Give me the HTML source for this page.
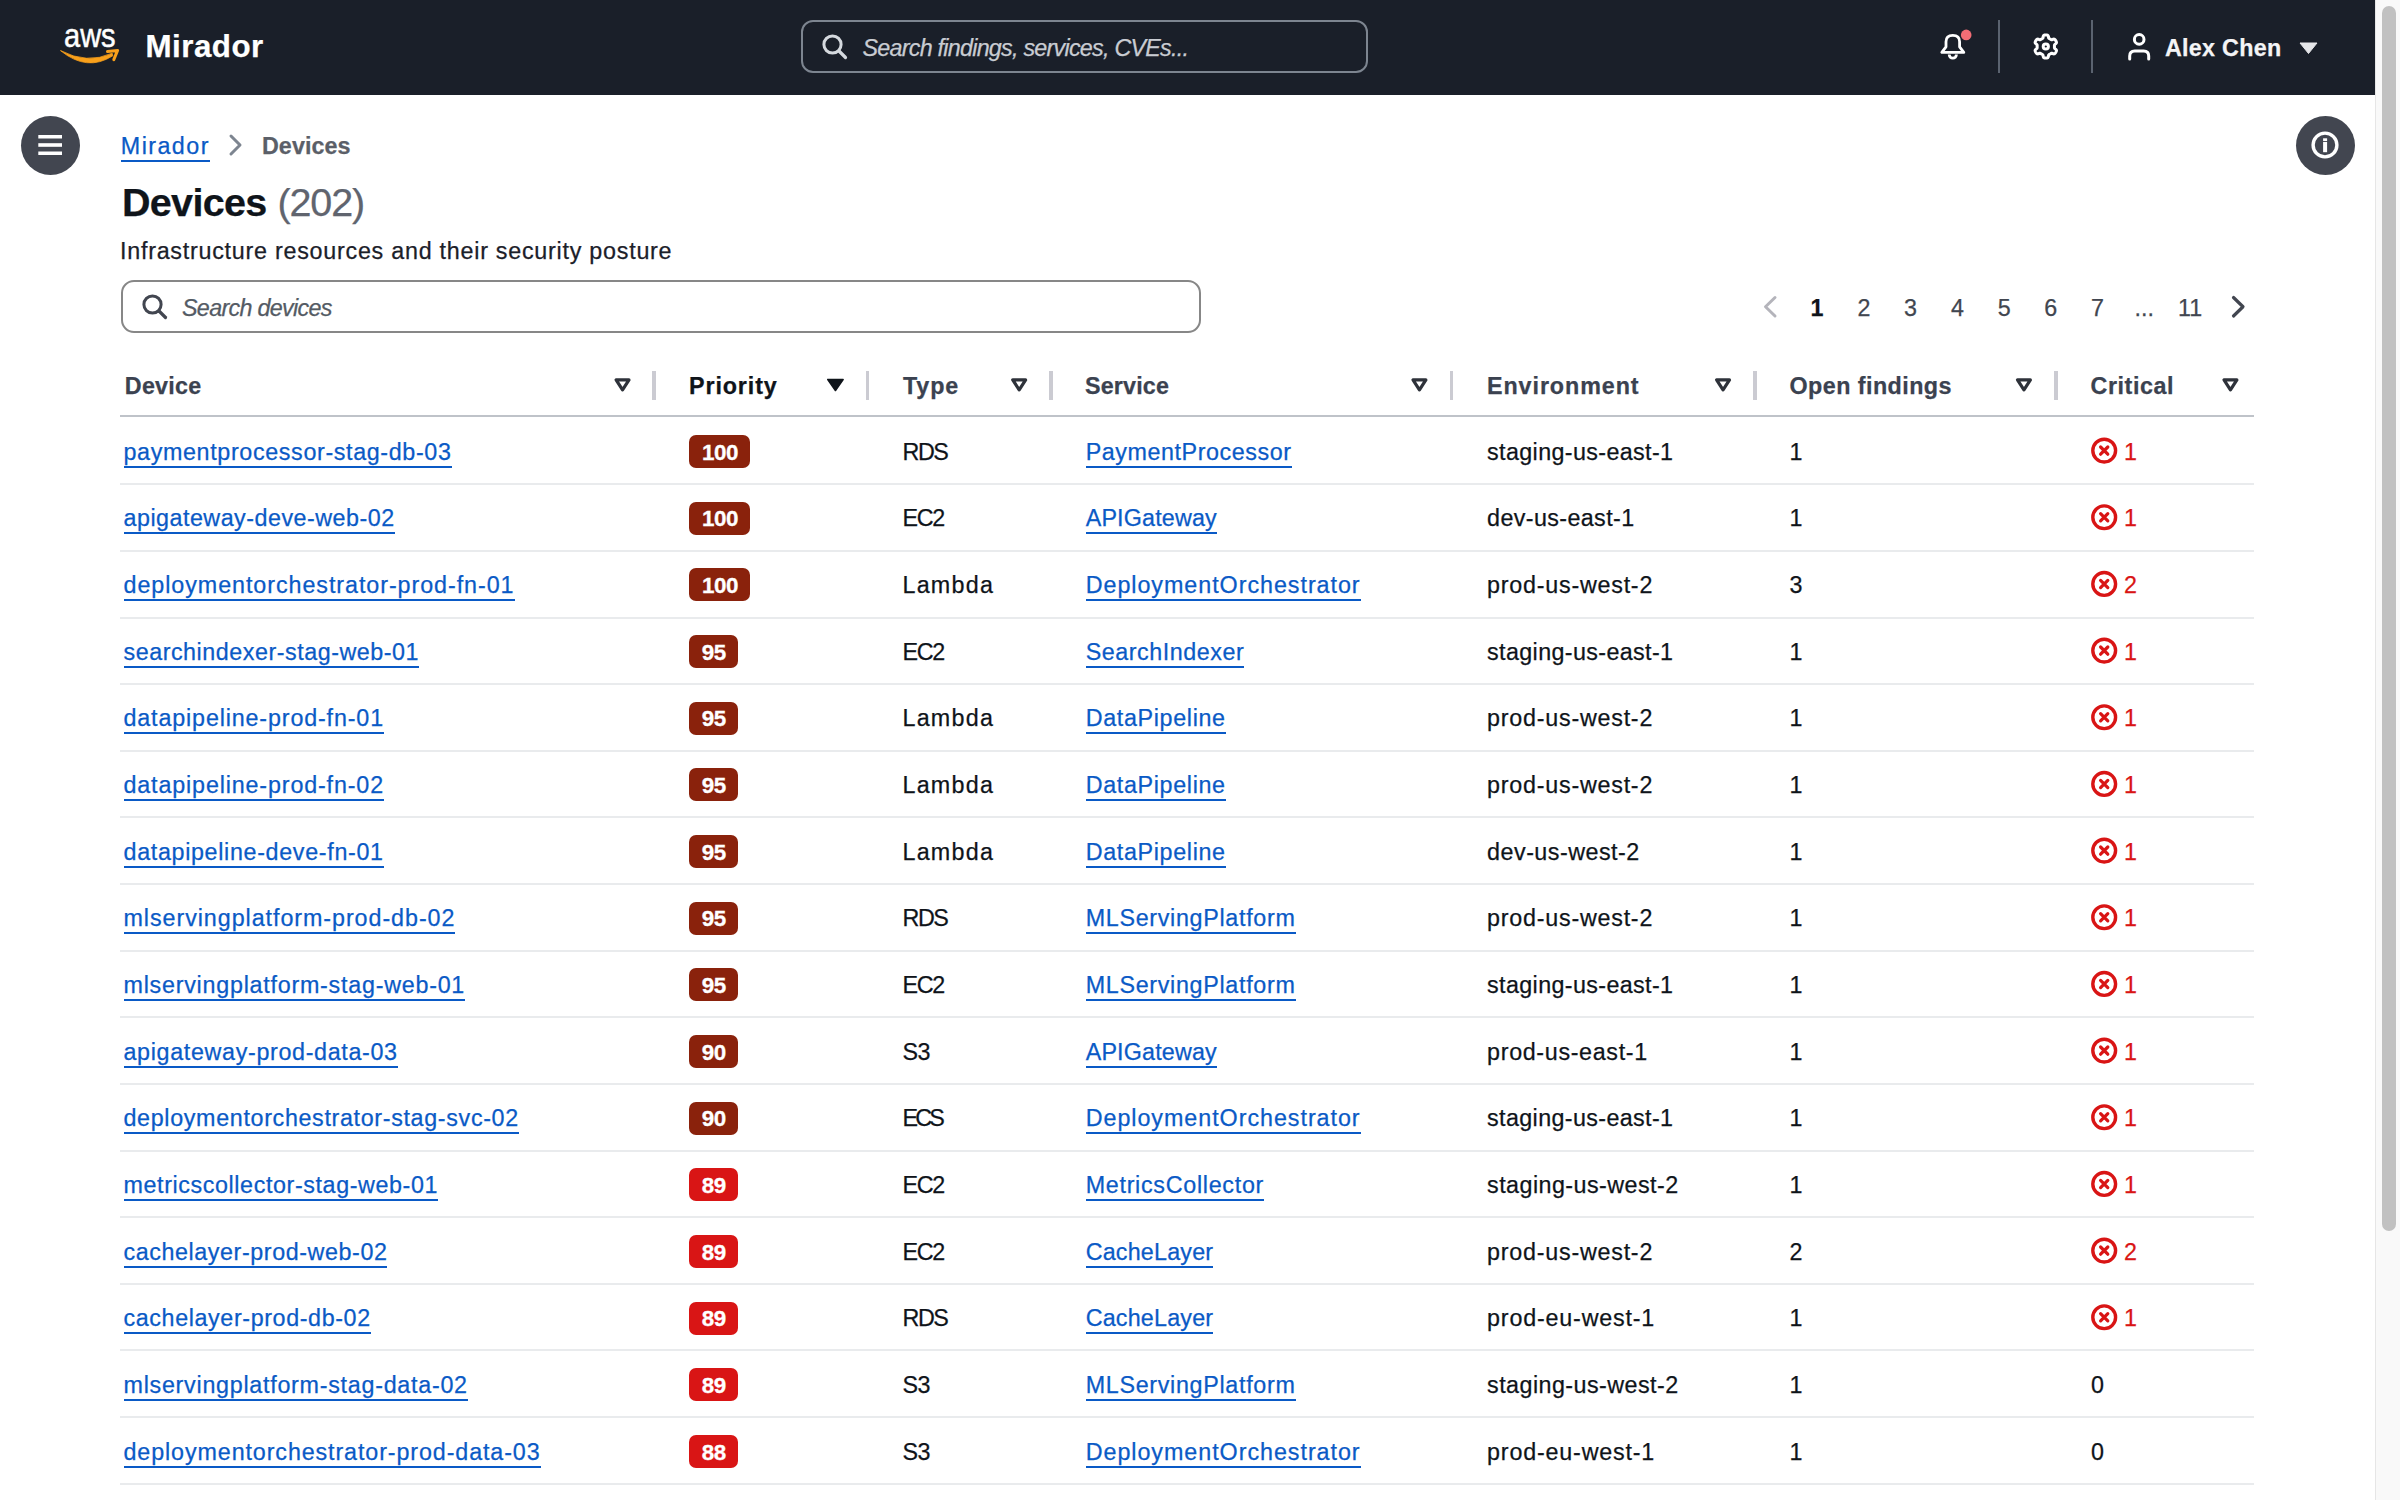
<!DOCTYPE html><html><head><meta charset="utf-8"><title>Devices</title><style>
*{margin:0;padding:0;box-sizing:border-box}
html,body{width:2400px;height:1500px;overflow:hidden;background:#fff}
body{position:relative;font-family:"Liberation Sans",sans-serif;color:#0f141a}
.t{position:absolute;white-space:nowrap;line-height:1;-webkit-text-stroke:0.25px currentColor}
.lnk::after{content:"";position:absolute;left:0;right:0;top:24.8px;height:2px;background:#0a5ac6}
#hdr{position:absolute;left:0;top:0;width:2376px;height:95px;background:#1a1f29}
.sep{position:absolute;background:#5b6370}
.circ{position:absolute;width:59px;height:59px;border-radius:50%;background:#424650}
.box{position:absolute;border-style:solid}
.hsep{position:absolute;top:370.5px;width:3.4px;height:29.2px;background:#cbcbd2}
.hline{position:absolute;left:120px;width:2134px;height:2px}
.badge{position:absolute;height:33px;border-radius:7px;color:#fff;font-weight:700;font-size:22.4px;line-height:1;text-align:center;letter-spacing:-0.5px;text-indent:0.5px;-webkit-text-stroke:0.3px #fff}
.dk{background:#8a220c}
.rd{background:#d91515}
svg{position:absolute;left:0;top:0;overflow:visible}
</style></head><body>
<div id="hdr"></div>
<span class="t" style="left:63.5px;top:18.6px;font-size:33px;color:#fff;-webkit-text-stroke:0.5px #fff;transform:scaleX(0.88);transform-origin:0 0">aws</span>
<div class="box" style="left:801px;top:20px;width:567px;height:53px;border-width:2px;border-color:#7d8590;border-radius:12px"></div>
<div class="sep" style="left:1997.5px;top:19.5px;width:2px;height:53.5px"></div>
<div class="sep" style="left:2091px;top:19.5px;width:2px;height:53.5px"></div>
<div style="position:absolute;left:2375px;top:0;width:25px;height:1500px;background:#f9f9f9;border-left:1px solid #e6e6e6"></div>
<div style="position:absolute;left:2381.5px;top:6px;width:14px;height:1225px;border-radius:7px;background:#c1c1c1"></div>
<div class="circ" style="left:20.5px;top:115.5px"></div>
<div class="circ" style="left:2295.5px;top:115.5px"></div>
<div class="box" style="left:121px;top:280px;width:1080px;height:53px;border-width:2px;border-color:#878787;border-radius:13px"></div>
<div class="hsep" style="left:652.3px"></div>
<div class="hsep" style="left:866px"></div>
<div class="hsep" style="left:1049.3px"></div>
<div class="hsep" style="left:1449.9px"></div>
<div class="hsep" style="left:1753.3px"></div>
<div class="hsep" style="left:2054.3px"></div>
<div class="hline" style="top:415px;background:#bfc3c9"></div>
<div class="hline" style="top:483.30px;background:#e9ebed"></div>
<span class="badge dk" style="left:689.3px;top:435.00px;width:61px;padding-top:6.54px">100</span>
<div class="hline" style="top:549.93px;background:#e9ebed"></div>
<span class="badge dk" style="left:689.3px;top:501.67px;width:61px;padding-top:6.54px">100</span>
<div class="hline" style="top:616.56px;background:#e9ebed"></div>
<span class="badge dk" style="left:689.3px;top:568.33px;width:61px;padding-top:6.54px">100</span>
<div class="hline" style="top:683.19px;background:#e9ebed"></div>
<span class="badge dk" style="left:689.3px;top:635.00px;width:48.5px;padding-top:6.54px">95</span>
<div class="hline" style="top:749.82px;background:#e9ebed"></div>
<span class="badge dk" style="left:689.3px;top:701.67px;width:48.5px;padding-top:6.54px">95</span>
<div class="hline" style="top:816.45px;background:#e9ebed"></div>
<span class="badge dk" style="left:689.3px;top:768.34px;width:48.5px;padding-top:6.54px">95</span>
<div class="hline" style="top:883.08px;background:#e9ebed"></div>
<span class="badge dk" style="left:689.3px;top:835.00px;width:48.5px;padding-top:6.54px">95</span>
<div class="hline" style="top:949.71px;background:#e9ebed"></div>
<span class="badge dk" style="left:689.3px;top:901.67px;width:48.5px;padding-top:6.54px">95</span>
<div class="hline" style="top:1016.34px;background:#e9ebed"></div>
<span class="badge dk" style="left:689.3px;top:968.34px;width:48.5px;padding-top:6.54px">95</span>
<div class="hline" style="top:1082.97px;background:#e9ebed"></div>
<span class="badge dk" style="left:689.3px;top:1035.00px;width:48.5px;padding-top:6.54px">90</span>
<div class="hline" style="top:1149.60px;background:#e9ebed"></div>
<span class="badge dk" style="left:689.3px;top:1101.67px;width:48.5px;padding-top:6.54px">90</span>
<div class="hline" style="top:1216.23px;background:#e9ebed"></div>
<span class="badge rd" style="left:689.3px;top:1168.34px;width:48.5px;padding-top:6.54px">89</span>
<div class="hline" style="top:1282.86px;background:#e9ebed"></div>
<span class="badge rd" style="left:689.3px;top:1235.00px;width:48.5px;padding-top:6.54px">89</span>
<div class="hline" style="top:1349.49px;background:#e9ebed"></div>
<span class="badge rd" style="left:689.3px;top:1301.67px;width:48.5px;padding-top:6.54px">89</span>
<div class="hline" style="top:1416.12px;background:#e9ebed"></div>
<span class="badge rd" style="left:689.3px;top:1368.34px;width:48.5px;padding-top:6.54px">89</span>
<div class="hline" style="top:1482.75px;background:#e9ebed"></div>
<span class="badge rd" style="left:689.3px;top:1435.00px;width:48.5px;padding-top:6.54px">88</span>
<span class="t" style="top:30.90px;font-size:31.3px;font-weight:700;color:#fff;letter-spacing:0.49px;left:145.50px;">Mirador</span>
<span class="t" style="top:36.83px;font-size:23.3px;font-style:italic;color:#c9ccd2;letter-spacing:-0.74px;left:862.50px;">Search findings, services, CVEs...</span>
<span class="t" style="top:36.83px;font-size:23.3px;font-weight:700;color:#f4f4f6;letter-spacing:0.28px;left:2165.00px;">Alex Chen</span>
<span class="t lnk" style="top:134.83px;font-size:23.3px;color:#0a5ac6;letter-spacing:1.44px;left:120.80px;">Mirador</span>
<span class="t" style="top:134.83px;font-size:23.3px;font-weight:700;color:#5b5f68;letter-spacing:0.05px;left:262.00px;">Devices</span>
<span class="t" style="top:182.81px;font-size:39.5px;font-weight:700;color:#0f141a;letter-spacing:-0.69px;left:122.00px;">Devices</span>
<span class="t" style="top:182.81px;font-size:39.5px;color:#60646e;letter-spacing:-1.13px;left:277.50px;">(202)</span>
<span class="t" style="top:239.83px;font-size:23.3px;color:#1b2029;letter-spacing:0.75px;left:120.00px;">Infrastructure resources and their security posture</span>
<span class="t" style="top:296.58px;font-size:23.3px;font-style:italic;color:#545b64;letter-spacing:-0.68px;left:182.00px;">Search devices</span>
<span class="t" style="top:296.88px;font-size:23.3px;font-weight:700;color:#0f141a;left:1777.00px;width:80px;text-align:center;">1</span>
<span class="t" style="top:296.88px;font-size:23.3px;color:#414650;left:1824.00px;width:80px;text-align:center;">2</span>
<span class="t" style="top:296.88px;font-size:23.3px;color:#414650;left:1870.40px;width:80px;text-align:center;">3</span>
<span class="t" style="top:296.88px;font-size:23.3px;color:#414650;left:1917.50px;width:80px;text-align:center;">4</span>
<span class="t" style="top:296.88px;font-size:23.3px;color:#414650;left:1964.30px;width:80px;text-align:center;">5</span>
<span class="t" style="top:296.88px;font-size:23.3px;color:#414650;left:2010.70px;width:80px;text-align:center;">6</span>
<span class="t" style="top:296.88px;font-size:23.3px;color:#414650;left:2057.50px;width:80px;text-align:center;">7</span>
<span class="t" style="top:296.88px;font-size:23.3px;color:#414650;left:2104.20px;width:80px;text-align:center;">...</span>
<span class="t" style="top:296.88px;font-size:23.3px;color:#414650;left:2150.00px;width:80px;text-align:center;">11</span>
<span class="t" style="top:375.08px;font-size:23.3px;font-weight:700;color:#3b4250;letter-spacing:0.26px;left:124.80px;">Device</span>
<span class="t" style="top:375.08px;font-size:23.3px;font-weight:700;color:#0f141a;letter-spacing:0.89px;left:689.00px;">Priority</span>
<span class="t" style="top:375.08px;font-size:23.3px;font-weight:700;color:#3b4250;letter-spacing:0.85px;left:903.00px;">Type</span>
<span class="t" style="top:375.08px;font-size:23.3px;font-weight:700;color:#3b4250;letter-spacing:0.17px;left:1085.00px;">Service</span>
<span class="t" style="top:375.08px;font-size:23.3px;font-weight:700;color:#3b4250;letter-spacing:0.92px;left:1487.00px;">Environment</span>
<span class="t" style="top:375.08px;font-size:23.3px;font-weight:700;color:#3b4250;letter-spacing:0.45px;left:1789.50px;">Open findings</span>
<span class="t" style="top:375.08px;font-size:23.3px;font-weight:700;color:#3b4250;letter-spacing:0.57px;left:2090.50px;">Critical</span>
<span class="t lnk" style="top:440.78px;font-size:23.3px;color:#0a5ac6;letter-spacing:0.64px;left:123.50px;">paymentprocessor-stag-db-03</span>
<span class="t" style="top:440.78px;font-size:23.3px;color:#0f141a;letter-spacing:-1.42px;left:902.50px;">RDS</span>
<span class="t lnk" style="top:440.78px;font-size:23.3px;color:#0a5ac6;letter-spacing:0.57px;left:1085.70px;">PaymentProcessor</span>
<span class="t" style="top:440.78px;font-size:23.3px;color:#0f141a;letter-spacing:0.37px;left:1487.10px;">staging-us-east-1</span>
<span class="t" style="top:440.78px;font-size:23.3px;color:#0f141a;left:1756.00px;width:80px;text-align:center;">1</span>
<span class="t" style="top:440.78px;font-size:23.3px;color:#d91515;left:2090.50px;width:80px;text-align:center;">1</span>
<span class="t lnk" style="top:507.44px;font-size:23.3px;color:#0a5ac6;letter-spacing:0.49px;left:123.50px;">apigateway-deve-web-02</span>
<span class="t" style="top:507.44px;font-size:23.3px;color:#0f141a;letter-spacing:-1.25px;left:902.50px;">EC2</span>
<span class="t lnk" style="top:507.44px;font-size:23.3px;color:#0a5ac6;letter-spacing:0.17px;left:1085.70px;">APIGateway</span>
<span class="t" style="top:507.44px;font-size:23.3px;color:#0f141a;letter-spacing:0.38px;left:1487.10px;">dev-us-east-1</span>
<span class="t" style="top:507.44px;font-size:23.3px;color:#0f141a;left:1756.00px;width:80px;text-align:center;">1</span>
<span class="t" style="top:507.44px;font-size:23.3px;color:#d91515;left:2090.50px;width:80px;text-align:center;">1</span>
<span class="t lnk" style="top:574.11px;font-size:23.3px;color:#0a5ac6;letter-spacing:0.94px;left:123.50px;">deploymentorchestrator-prod-fn-01</span>
<span class="t" style="top:574.11px;font-size:23.3px;color:#0f141a;letter-spacing:1.23px;left:902.50px;">Lambda</span>
<span class="t lnk" style="top:574.11px;font-size:23.3px;color:#0a5ac6;letter-spacing:0.96px;left:1085.70px;">DeploymentOrchestrator</span>
<span class="t" style="top:574.11px;font-size:23.3px;color:#0f141a;letter-spacing:0.76px;left:1487.10px;">prod-us-west-2</span>
<span class="t" style="top:574.11px;font-size:23.3px;color:#0f141a;left:1756.00px;width:80px;text-align:center;">3</span>
<span class="t" style="top:574.11px;font-size:23.3px;color:#d91515;left:2090.50px;width:80px;text-align:center;">2</span>
<span class="t lnk" style="top:640.78px;font-size:23.3px;color:#0a5ac6;letter-spacing:0.53px;left:123.50px;">searchindexer-stag-web-01</span>
<span class="t" style="top:640.78px;font-size:23.3px;color:#0f141a;letter-spacing:-1.25px;left:902.50px;">EC2</span>
<span class="t lnk" style="top:640.78px;font-size:23.3px;color:#0a5ac6;letter-spacing:0.54px;left:1085.70px;">SearchIndexer</span>
<span class="t" style="top:640.78px;font-size:23.3px;color:#0f141a;letter-spacing:0.37px;left:1487.10px;">staging-us-east-1</span>
<span class="t" style="top:640.78px;font-size:23.3px;color:#0f141a;left:1756.00px;width:80px;text-align:center;">1</span>
<span class="t" style="top:640.78px;font-size:23.3px;color:#d91515;left:2090.50px;width:80px;text-align:center;">1</span>
<span class="t lnk" style="top:707.44px;font-size:23.3px;color:#0a5ac6;letter-spacing:0.85px;left:123.50px;">datapipeline-prod-fn-01</span>
<span class="t" style="top:707.44px;font-size:23.3px;color:#0f141a;letter-spacing:1.23px;left:902.50px;">Lambda</span>
<span class="t lnk" style="top:707.44px;font-size:23.3px;color:#0a5ac6;letter-spacing:0.66px;left:1085.70px;">DataPipeline</span>
<span class="t" style="top:707.44px;font-size:23.3px;color:#0f141a;letter-spacing:0.76px;left:1487.10px;">prod-us-west-2</span>
<span class="t" style="top:707.44px;font-size:23.3px;color:#0f141a;left:1756.00px;width:80px;text-align:center;">1</span>
<span class="t" style="top:707.44px;font-size:23.3px;color:#d91515;left:2090.50px;width:80px;text-align:center;">1</span>
<span class="t lnk" style="top:774.11px;font-size:23.3px;color:#0a5ac6;letter-spacing:0.85px;left:123.50px;">datapipeline-prod-fn-02</span>
<span class="t" style="top:774.11px;font-size:23.3px;color:#0f141a;letter-spacing:1.23px;left:902.50px;">Lambda</span>
<span class="t lnk" style="top:774.11px;font-size:23.3px;color:#0a5ac6;letter-spacing:0.66px;left:1085.70px;">DataPipeline</span>
<span class="t" style="top:774.11px;font-size:23.3px;color:#0f141a;letter-spacing:0.76px;left:1487.10px;">prod-us-west-2</span>
<span class="t" style="top:774.11px;font-size:23.3px;color:#0f141a;left:1756.00px;width:80px;text-align:center;">1</span>
<span class="t" style="top:774.11px;font-size:23.3px;color:#d91515;left:2090.50px;width:80px;text-align:center;">1</span>
<span class="t lnk" style="top:840.78px;font-size:23.3px;color:#0a5ac6;letter-spacing:0.67px;left:123.50px;">datapipeline-deve-fn-01</span>
<span class="t" style="top:840.78px;font-size:23.3px;color:#0f141a;letter-spacing:1.23px;left:902.50px;">Lambda</span>
<span class="t lnk" style="top:840.78px;font-size:23.3px;color:#0a5ac6;letter-spacing:0.66px;left:1085.70px;">DataPipeline</span>
<span class="t" style="top:840.78px;font-size:23.3px;color:#0f141a;letter-spacing:0.49px;left:1487.10px;">dev-us-west-2</span>
<span class="t" style="top:840.78px;font-size:23.3px;color:#0f141a;left:1756.00px;width:80px;text-align:center;">1</span>
<span class="t" style="top:840.78px;font-size:23.3px;color:#d91515;left:2090.50px;width:80px;text-align:center;">1</span>
<span class="t lnk" style="top:907.45px;font-size:23.3px;color:#0a5ac6;letter-spacing:0.94px;left:123.50px;">mlservingplatform-prod-db-02</span>
<span class="t" style="top:907.45px;font-size:23.3px;color:#0f141a;letter-spacing:-1.42px;left:902.50px;">RDS</span>
<span class="t lnk" style="top:907.45px;font-size:23.3px;color:#0a5ac6;letter-spacing:0.69px;left:1085.70px;">MLServingPlatform</span>
<span class="t" style="top:907.45px;font-size:23.3px;color:#0f141a;letter-spacing:0.76px;left:1487.10px;">prod-us-west-2</span>
<span class="t" style="top:907.45px;font-size:23.3px;color:#0f141a;left:1756.00px;width:80px;text-align:center;">1</span>
<span class="t" style="top:907.45px;font-size:23.3px;color:#d91515;left:2090.50px;width:80px;text-align:center;">1</span>
<span class="t lnk" style="top:974.11px;font-size:23.3px;color:#0a5ac6;letter-spacing:0.75px;left:123.50px;">mlservingplatform-stag-web-01</span>
<span class="t" style="top:974.11px;font-size:23.3px;color:#0f141a;letter-spacing:-1.25px;left:902.50px;">EC2</span>
<span class="t lnk" style="top:974.11px;font-size:23.3px;color:#0a5ac6;letter-spacing:0.69px;left:1085.70px;">MLServingPlatform</span>
<span class="t" style="top:974.11px;font-size:23.3px;color:#0f141a;letter-spacing:0.37px;left:1487.10px;">staging-us-east-1</span>
<span class="t" style="top:974.11px;font-size:23.3px;color:#0f141a;left:1756.00px;width:80px;text-align:center;">1</span>
<span class="t" style="top:974.11px;font-size:23.3px;color:#d91515;left:2090.50px;width:80px;text-align:center;">1</span>
<span class="t lnk" style="top:1040.78px;font-size:23.3px;color:#0a5ac6;letter-spacing:0.66px;left:123.50px;">apigateway-prod-data-03</span>
<span class="t" style="top:1040.78px;font-size:23.3px;color:#0f141a;letter-spacing:-0.53px;left:902.50px;">S3</span>
<span class="t lnk" style="top:1040.78px;font-size:23.3px;color:#0a5ac6;letter-spacing:0.17px;left:1085.70px;">APIGateway</span>
<span class="t" style="top:1040.78px;font-size:23.3px;color:#0f141a;letter-spacing:0.66px;left:1487.10px;">prod-us-east-1</span>
<span class="t" style="top:1040.78px;font-size:23.3px;color:#0f141a;left:1756.00px;width:80px;text-align:center;">1</span>
<span class="t" style="top:1040.78px;font-size:23.3px;color:#d91515;left:2090.50px;width:80px;text-align:center;">1</span>
<span class="t lnk" style="top:1107.45px;font-size:23.3px;color:#0a5ac6;letter-spacing:0.66px;left:123.50px;">deploymentorchestrator-stag-svc-02</span>
<span class="t" style="top:1107.45px;font-size:23.3px;color:#0f141a;letter-spacing:-2.83px;left:902.50px;">ECS</span>
<span class="t lnk" style="top:1107.45px;font-size:23.3px;color:#0a5ac6;letter-spacing:0.96px;left:1085.70px;">DeploymentOrchestrator</span>
<span class="t" style="top:1107.45px;font-size:23.3px;color:#0f141a;letter-spacing:0.37px;left:1487.10px;">staging-us-east-1</span>
<span class="t" style="top:1107.45px;font-size:23.3px;color:#0f141a;left:1756.00px;width:80px;text-align:center;">1</span>
<span class="t" style="top:1107.45px;font-size:23.3px;color:#d91515;left:2090.50px;width:80px;text-align:center;">1</span>
<span class="t lnk" style="top:1174.11px;font-size:23.3px;color:#0a5ac6;letter-spacing:0.60px;left:123.50px;">metricscollector-stag-web-01</span>
<span class="t" style="top:1174.11px;font-size:23.3px;color:#0f141a;letter-spacing:-1.25px;left:902.50px;">EC2</span>
<span class="t lnk" style="top:1174.11px;font-size:23.3px;color:#0a5ac6;letter-spacing:0.71px;left:1085.70px;">MetricsCollector</span>
<span class="t" style="top:1174.11px;font-size:23.3px;color:#0f141a;letter-spacing:0.45px;left:1487.10px;">staging-us-west-2</span>
<span class="t" style="top:1174.11px;font-size:23.3px;color:#0f141a;left:1756.00px;width:80px;text-align:center;">1</span>
<span class="t" style="top:1174.11px;font-size:23.3px;color:#d91515;left:2090.50px;width:80px;text-align:center;">1</span>
<span class="t lnk" style="top:1240.78px;font-size:23.3px;color:#0a5ac6;letter-spacing:0.58px;left:123.50px;">cachelayer-prod-web-02</span>
<span class="t" style="top:1240.78px;font-size:23.3px;color:#0f141a;letter-spacing:-1.25px;left:902.50px;">EC2</span>
<span class="t lnk" style="top:1240.78px;font-size:23.3px;color:#0a5ac6;letter-spacing:0.20px;left:1085.70px;">CacheLayer</span>
<span class="t" style="top:1240.78px;font-size:23.3px;color:#0f141a;letter-spacing:0.76px;left:1487.10px;">prod-us-west-2</span>
<span class="t" style="top:1240.78px;font-size:23.3px;color:#0f141a;left:1756.00px;width:80px;text-align:center;">2</span>
<span class="t" style="top:1240.78px;font-size:23.3px;color:#d91515;left:2090.50px;width:80px;text-align:center;">2</span>
<span class="t lnk" style="top:1307.45px;font-size:23.3px;color:#0a5ac6;letter-spacing:0.61px;left:123.50px;">cachelayer-prod-db-02</span>
<span class="t" style="top:1307.45px;font-size:23.3px;color:#0f141a;letter-spacing:-1.42px;left:902.50px;">RDS</span>
<span class="t lnk" style="top:1307.45px;font-size:23.3px;color:#0a5ac6;letter-spacing:0.20px;left:1085.70px;">CacheLayer</span>
<span class="t" style="top:1307.45px;font-size:23.3px;color:#0f141a;letter-spacing:0.81px;left:1487.10px;">prod-eu-west-1</span>
<span class="t" style="top:1307.45px;font-size:23.3px;color:#0f141a;left:1756.00px;width:80px;text-align:center;">1</span>
<span class="t" style="top:1307.45px;font-size:23.3px;color:#d91515;left:2090.50px;width:80px;text-align:center;">1</span>
<span class="t lnk" style="top:1374.11px;font-size:23.3px;color:#0a5ac6;letter-spacing:0.73px;left:123.50px;">mlservingplatform-stag-data-02</span>
<span class="t" style="top:1374.11px;font-size:23.3px;color:#0f141a;letter-spacing:-0.53px;left:902.50px;">S3</span>
<span class="t lnk" style="top:1374.11px;font-size:23.3px;color:#0a5ac6;letter-spacing:0.69px;left:1085.70px;">MLServingPlatform</span>
<span class="t" style="top:1374.11px;font-size:23.3px;color:#0f141a;letter-spacing:0.45px;left:1487.10px;">staging-us-west-2</span>
<span class="t" style="top:1374.11px;font-size:23.3px;color:#0f141a;left:1756.00px;width:80px;text-align:center;">1</span>
<span class="t" style="top:1374.11px;font-size:23.3px;color:#0f141a;left:2057.60px;width:80px;text-align:center;">0</span>
<span class="t lnk" style="top:1440.78px;font-size:23.3px;color:#0a5ac6;letter-spacing:0.89px;left:123.50px;">deploymentorchestrator-prod-data-03</span>
<span class="t" style="top:1440.78px;font-size:23.3px;color:#0f141a;letter-spacing:-0.53px;left:902.50px;">S3</span>
<span class="t lnk" style="top:1440.78px;font-size:23.3px;color:#0a5ac6;letter-spacing:0.96px;left:1085.70px;">DeploymentOrchestrator</span>
<span class="t" style="top:1440.78px;font-size:23.3px;color:#0f141a;letter-spacing:0.81px;left:1487.10px;">prod-eu-west-1</span>
<span class="t" style="top:1440.78px;font-size:23.3px;color:#0f141a;left:1756.00px;width:80px;text-align:center;">1</span>
<span class="t" style="top:1440.78px;font-size:23.3px;color:#0f141a;left:2057.60px;width:80px;text-align:center;">0</span>
<svg width="2400" height="1500"><path d="M60.5 50.6 Q87 72.2 112.8 55.8 L112.2 53.2 Q87 64.6 60.5 50.6 Z" fill="#f9a01b" stroke="#f9a01b" stroke-width="0.8" stroke-linejoin="round"/><path d="M107.5 51.6 L117.6 50.4 L113.8 59.6" fill="none" stroke="#f9a01b" stroke-width="3" stroke-linecap="round" stroke-linejoin="round"/><circle cx="832.5" cy="44.5" r="8.6" fill="none" stroke="#d5d9de" stroke-width="3"/><line x1="839" y1="51" x2="845.5" y2="57.5" stroke="#d5d9de" stroke-width="3.2" stroke-linecap="round"/><path d="M1941.8 52.4 L1963.8 52.4 L1959.6 46.8 L1959.6 41.8 Q1959.6 35.4 1952.8 35.4 Q1946 35.4 1946 41.8 L1946 46.8 Z" fill="none" stroke="#fff" stroke-width="2.8" stroke-linejoin="round"/><path d="M1949.2 54.6 A3.6 3.6 0 0 0 1956.4 54.6" fill="none" stroke="#fff" stroke-width="2.8"/><circle cx="1966.2" cy="34.9" r="5.3" fill="#f26d75"/><path d="M2045.80 34.95 L2046.20 34.96 L2046.61 34.99 L2047.00 35.04 L2047.40 35.13 L2047.77 35.31 L2048.10 35.67 L2048.34 36.32 L2048.48 37.17 L2048.62 37.82 L2048.82 38.20 L2049.07 38.41 L2049.33 38.57 L2049.60 38.72 L2049.86 38.86 L2050.12 39.01 L2050.38 39.16 L2050.64 39.32 L2050.90 39.48 L2051.17 39.63 L2051.48 39.73 L2051.90 39.72 L2052.55 39.51 L2053.35 39.21 L2054.03 39.09 L2054.50 39.20 L2054.85 39.43 L2055.12 39.73 L2055.37 40.05 L2055.59 40.38 L2055.80 40.73 L2056.00 41.08 L2056.17 41.44 L2056.33 41.81 L2056.44 42.20 L2056.48 42.61 L2056.33 43.08 L2055.88 43.61 L2055.22 44.15 L2054.72 44.60 L2054.50 44.97 L2054.44 45.29 L2054.43 45.59 L2054.44 45.90 L2054.45 46.20 L2054.45 46.50 L2054.45 46.80 L2054.44 47.10 L2054.43 47.41 L2054.44 47.71 L2054.50 48.03 L2054.72 48.40 L2055.22 48.85 L2055.88 49.39 L2056.33 49.92 L2056.48 50.39 L2056.44 50.80 L2056.33 51.19 L2056.17 51.56 L2056.00 51.92 L2055.80 52.27 L2055.59 52.62 L2055.37 52.95 L2055.12 53.27 L2054.85 53.57 L2054.50 53.80 L2054.03 53.91 L2053.35 53.79 L2052.55 53.49 L2051.90 53.28 L2051.48 53.27 L2051.17 53.37 L2050.90 53.52 L2050.64 53.68 L2050.38 53.84 L2050.12 53.99 L2049.86 54.14 L2049.60 54.28 L2049.33 54.43 L2049.07 54.59 L2048.82 54.80 L2048.62 55.18 L2048.48 55.83 L2048.34 56.68 L2048.10 57.33 L2047.77 57.69 L2047.40 57.87 L2047.00 57.96 L2046.61 58.01 L2046.20 58.04 L2045.80 58.05 L2045.40 58.04 L2044.99 58.01 L2044.60 57.96 L2044.20 57.87 L2043.83 57.69 L2043.50 57.33 L2043.26 56.68 L2043.12 55.83 L2042.98 55.18 L2042.78 54.80 L2042.53 54.59 L2042.27 54.43 L2042.00 54.28 L2041.74 54.14 L2041.47 53.99 L2041.22 53.84 L2040.96 53.68 L2040.70 53.52 L2040.43 53.37 L2040.12 53.27 L2039.70 53.28 L2039.05 53.49 L2038.25 53.79 L2037.57 53.91 L2037.10 53.80 L2036.75 53.57 L2036.48 53.27 L2036.23 52.95 L2036.01 52.62 L2035.80 52.28 L2035.60 51.92 L2035.43 51.56 L2035.27 51.19 L2035.16 50.80 L2035.12 50.39 L2035.27 49.92 L2035.72 49.39 L2036.38 48.85 L2036.88 48.40 L2037.10 48.03 L2037.16 47.71 L2037.17 47.41 L2037.16 47.10 L2037.15 46.80 L2037.15 46.50 L2037.15 46.20 L2037.16 45.90 L2037.17 45.59 L2037.16 45.29 L2037.10 44.97 L2036.88 44.60 L2036.38 44.15 L2035.72 43.61 L2035.27 43.08 L2035.12 42.61 L2035.16 42.20 L2035.27 41.81 L2035.43 41.44 L2035.60 41.08 L2035.80 40.73 L2036.01 40.38 L2036.23 40.05 L2036.48 39.73 L2036.75 39.43 L2037.10 39.20 L2037.57 39.09 L2038.25 39.21 L2039.05 39.51 L2039.70 39.72 L2040.12 39.73 L2040.43 39.63 L2040.70 39.48 L2040.96 39.32 L2041.22 39.16 L2041.47 39.01 L2041.74 38.86 L2042.00 38.72 L2042.27 38.57 L2042.53 38.41 L2042.78 38.20 L2042.98 37.82 L2043.12 37.17 L2043.26 36.32 L2043.50 35.67 L2043.83 35.31 L2044.20 35.13 L2044.60 35.04 L2044.99 34.99 L2045.40 34.96 Z" fill="none" stroke="#fff" stroke-width="3" stroke-linejoin="round"/><circle cx="2045.8" cy="46.5" r="2.6" fill="none" stroke="#fff" stroke-width="3"/><circle cx="2139.2" cy="39.4" r="4.8" fill="none" stroke="#fff" stroke-width="3"/><path d="M2129.7 59 L2129.7 56 Q2129.7 51 2134.7 51 L2143.7 51 Q2148.7 51 2148.7 56 L2148.7 59" fill="none" stroke="#fff" stroke-width="3" stroke-linecap="round"/><path d="M2300 43 L2317 43 L2308.5 53.5 Z" fill="#e6e7ea" stroke="#e6e7ea" stroke-width="1" stroke-linejoin="round"/><g fill="#fff"><rect x="38.3" y="135" width="23.7" height="3.5"/><rect x="38.3" y="143.2" width="23.7" height="3.6"/><rect x="38.3" y="151.5" width="23.7" height="3.5"/></g><circle cx="2325" cy="145" r="11.9" fill="none" stroke="#fff" stroke-width="3.4"/><rect x="2323.1" y="142" width="4" height="10.2" fill="#fff"/><rect x="2323.1" y="138.3" width="4" height="2.8" fill="#fff"/><path d="M231 136 L240 145 L231 154" fill="none" stroke="#7d8590" stroke-width="3" stroke-linecap="round" stroke-linejoin="round"/><circle cx="152.5" cy="304.5" r="8.6" fill="none" stroke="#424650" stroke-width="3"/><line x1="159" y1="311" x2="165.5" y2="317.5" stroke="#424650" stroke-width="3.2" stroke-linecap="round"/><path d="M1775 297.5 L1765.5 306.75 L1775 316" fill="none" stroke="#b4b4bb" stroke-width="3" stroke-linecap="round" stroke-linejoin="round"/><path d="M2233.5 297.5 L2243 306.75 L2233.5 316" fill="none" stroke="#424650" stroke-width="3.2" stroke-linecap="round" stroke-linejoin="round"/><path d="M616.1 379.9 L629.0 379.9 L622.5500000000001 389.9 Z" fill="none" stroke="#2e323a" stroke-width="3.2" stroke-linejoin="round"/><path d="M827.8 379.5 L843.1 379.5 L835.45 390.5 Z" fill="#0f141a" stroke="#0f141a" stroke-width="1.6" stroke-linejoin="round"/><path d="M1012.75 379.9 L1025.65 379.9 L1019.2 389.9 Z" fill="none" stroke="#2e323a" stroke-width="3.2" stroke-linejoin="round"/><path d="M1413.0 379.9 L1425.9 379.9 L1419.45 389.9 Z" fill="none" stroke="#2e323a" stroke-width="3.2" stroke-linejoin="round"/><path d="M1716.6 379.9 L1729.5 379.9 L1723.05 389.9 Z" fill="none" stroke="#2e323a" stroke-width="3.2" stroke-linejoin="round"/><path d="M2017.5 379.9 L2030.4 379.9 L2023.95 389.9 Z" fill="none" stroke="#2e323a" stroke-width="3.2" stroke-linejoin="round"/><path d="M2224.0 379.9 L2236.9 379.9 L2230.45 389.9 Z" fill="none" stroke="#2e323a" stroke-width="3.2" stroke-linejoin="round"/><circle cx="2104.2" cy="450.60" r="11.4" fill="none" stroke="#d91515" stroke-width="3.4"/><path d="M2100.6 447.00 L2107.8 454.20 M2107.8 447.00 L2100.6 454.20" stroke="#d91515" stroke-width="3.2" stroke-linecap="round"/><circle cx="2104.2" cy="517.27" r="11.4" fill="none" stroke="#d91515" stroke-width="3.4"/><path d="M2100.6 513.67 L2107.8 520.87 M2107.8 513.67 L2100.6 520.87" stroke="#d91515" stroke-width="3.2" stroke-linecap="round"/><circle cx="2104.2" cy="583.93" r="11.4" fill="none" stroke="#d91515" stroke-width="3.4"/><path d="M2100.6 580.33 L2107.8 587.53 M2107.8 580.33 L2100.6 587.53" stroke="#d91515" stroke-width="3.2" stroke-linecap="round"/><circle cx="2104.2" cy="650.60" r="11.4" fill="none" stroke="#d91515" stroke-width="3.4"/><path d="M2100.6 647.00 L2107.8 654.20 M2107.8 647.00 L2100.6 654.20" stroke="#d91515" stroke-width="3.2" stroke-linecap="round"/><circle cx="2104.2" cy="717.27" r="11.4" fill="none" stroke="#d91515" stroke-width="3.4"/><path d="M2100.6 713.67 L2107.8 720.87 M2107.8 713.67 L2100.6 720.87" stroke="#d91515" stroke-width="3.2" stroke-linecap="round"/><circle cx="2104.2" cy="783.94" r="11.4" fill="none" stroke="#d91515" stroke-width="3.4"/><path d="M2100.6 780.34 L2107.8 787.54 M2107.8 780.34 L2100.6 787.54" stroke="#d91515" stroke-width="3.2" stroke-linecap="round"/><circle cx="2104.2" cy="850.60" r="11.4" fill="none" stroke="#d91515" stroke-width="3.4"/><path d="M2100.6 847.00 L2107.8 854.20 M2107.8 847.00 L2100.6 854.20" stroke="#d91515" stroke-width="3.2" stroke-linecap="round"/><circle cx="2104.2" cy="917.27" r="11.4" fill="none" stroke="#d91515" stroke-width="3.4"/><path d="M2100.6 913.67 L2107.8 920.87 M2107.8 913.67 L2100.6 920.87" stroke="#d91515" stroke-width="3.2" stroke-linecap="round"/><circle cx="2104.2" cy="983.94" r="11.4" fill="none" stroke="#d91515" stroke-width="3.4"/><path d="M2100.6 980.34 L2107.8 987.54 M2107.8 980.34 L2100.6 987.54" stroke="#d91515" stroke-width="3.2" stroke-linecap="round"/><circle cx="2104.2" cy="1050.60" r="11.4" fill="none" stroke="#d91515" stroke-width="3.4"/><path d="M2100.6 1047.00 L2107.8 1054.20 M2107.8 1047.00 L2100.6 1054.20" stroke="#d91515" stroke-width="3.2" stroke-linecap="round"/><circle cx="2104.2" cy="1117.27" r="11.4" fill="none" stroke="#d91515" stroke-width="3.4"/><path d="M2100.6 1113.67 L2107.8 1120.87 M2107.8 1113.67 L2100.6 1120.87" stroke="#d91515" stroke-width="3.2" stroke-linecap="round"/><circle cx="2104.2" cy="1183.94" r="11.4" fill="none" stroke="#d91515" stroke-width="3.4"/><path d="M2100.6 1180.34 L2107.8 1187.54 M2107.8 1180.34 L2100.6 1187.54" stroke="#d91515" stroke-width="3.2" stroke-linecap="round"/><circle cx="2104.2" cy="1250.60" r="11.4" fill="none" stroke="#d91515" stroke-width="3.4"/><path d="M2100.6 1247.00 L2107.8 1254.20 M2107.8 1247.00 L2100.6 1254.20" stroke="#d91515" stroke-width="3.2" stroke-linecap="round"/><circle cx="2104.2" cy="1317.27" r="11.4" fill="none" stroke="#d91515" stroke-width="3.4"/><path d="M2100.6 1313.67 L2107.8 1320.87 M2107.8 1313.67 L2100.6 1320.87" stroke="#d91515" stroke-width="3.2" stroke-linecap="round"/></svg>
</body></html>
